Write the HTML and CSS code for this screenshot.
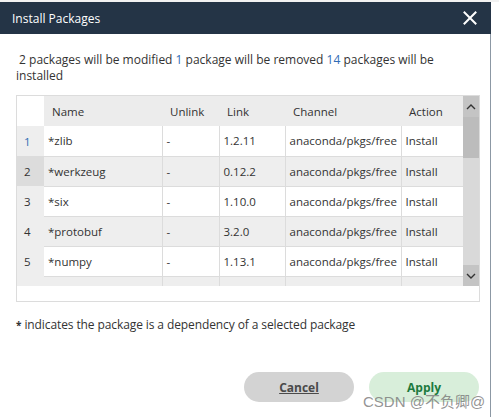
FILE: index.html
```html
<!DOCTYPE html>
<html>
<head>
<meta charset="utf-8">
<link rel="stylesheet" href="styles.css">
</head>
<body>
<div class="page">
  <div class="dialog">
    <div class="header">
      <span class="title">Install Packages</span>
      <svg class="close" width="14" height="14" viewBox="0 0 14 14"><path d="M1.5 1.5 L12.5 12.5 M12.5 1.5 L1.5 12.5" stroke="#fff" stroke-width="2" stroke-linecap="square"/></svg>
    </div>
    <div class="content">
      <div class="summary">
        <div class="line">&nbsp;2 packages will be modified <span class="num">1</span> package will be removed <span class="num">14</span> packages will be</div>
        <div class="line">installed</div>
      </div>
      <div class="grid-box">
        <div class="scroll-region">
          <div class="viewport">
            <table class="pkgs">
              <colgroup>
                <col class="c-num"><col class="c-name"><col class="c-unlink"><col class="c-link"><col class="c-channel"><col class="c-action">
              </colgroup>
              <thead>
                <tr><th class="rn"></th><th>Name</th><th>Unlink</th><th>Link</th><th>Channel</th><th>Action</th></tr>
              </thead>
              <tbody>
                <tr class="odd"><td class="rn first">1</td><td>*zlib</td><td>-</td><td>1.2.11</td><td>anaconda/pkgs/free</td><td>Install</td></tr>
                <tr class="even"><td class="rn hover">2</td><td>*werkzeug</td><td>-</td><td>0.12.2</td><td>anaconda/pkgs/free</td><td>Install</td></tr>
                <tr class="odd"><td class="rn">3</td><td>*six</td><td>-</td><td>1.10.0</td><td>anaconda/pkgs/free</td><td>Install</td></tr>
                <tr class="even"><td class="rn">4</td><td>*protobuf</td><td>-</td><td>3.2.0</td><td>anaconda/pkgs/free</td><td>Install</td></tr>
                <tr class="odd"><td class="rn">5</td><td>*numpy</td><td>-</td><td>1.13.1</td><td>anaconda/pkgs/free</td><td>Install</td></tr>
                <tr class="even"><td class="rn"></td><td></td><td></td><td></td><td></td><td></td></tr>
              </tbody>
            </table>
          </div>
          <div class="vscroll">
            <div class="sb-btn"><svg width="10" height="6" viewBox="0 0 10 6"><path d="M1 5 L5 1 L9 5" fill="none" stroke="#333" stroke-width="1.4"/></svg></div>
            <div class="sb-track"><div class="sb-thumb"></div></div>
            <div class="sb-btn"><svg width="10" height="6" viewBox="0 0 10 6"><path d="M1 1 L5 5 L9 1" fill="none" stroke="#333" stroke-width="1.4"/></svg></div>
          </div>
        </div>
        <div class="hblank"></div>
      </div>
      <p class="note"><b>*</b> indicates the package is a dependency of a selected package</p>
      <div class="actions">
        <button class="btn cancel">Cancel</button>
        <button class="btn apply">Apply</button>
      </div>
    </div>
  </div>
  <div class="behind"></div>
  <div class="watermark">CSDN @不负卿@</div>
</div>
</body>
</html>
```
FILE: styles.css
```css
* { box-sizing: border-box; }
html, body { margin: 0; padding: 0; }
body {
  width: 499px;
  height: 417px;
  overflow: hidden;
  background: #fff;
  font-family: "Open Sans", "Noto Sans", sans-serif;
  color: #333;
}
.page {
  position: relative;
  display: flex;
  width: 499px;
  height: 417px;
  padding-top: 2px;
  background: #f2f2f2;
}
.dialog {
  width: 491px;
  height: 415px;
  background: #fff;
  border-right: 1px solid #8c98a4;
  display: flex;
  flex-direction: column;
}
.header {
  height: 32px;
  background: #243446;
  display: flex;
  align-items: center;
  justify-content: space-between;
  padding: 0 14px 0 12px;
  margin-right: -1px;
}
.title {
  color: #fff;
  font-size: 12px;
}
.close { display: block; }
.content {
  padding: 0 10px 0 16px;
  display: flex;
  flex-direction: column;
}
.summary {
  margin: 18px 0 0 0;
  font-size: 12px;
  line-height: 16px;
}
.line { white-space: nowrap; }
.num { color: #2f6db5; }
.grid-box {
  margin-top: 11px;
  width: 464px;
  height: 207px;
  border: 1px solid #dcdcdc;
  background: #fff;
}
.scroll-region {
  display: flex;
  height: 190px;
}
.viewport {
  width: 446px;
  height: 190px;
  overflow: hidden;
}
.pkgs {
  width: 446px;
  table-layout: fixed;
  border-collapse: collapse;
  font-size: 11.5px;
}
.c-num { width: 27px; }
.c-name { width: 118px; }
.c-unlink { width: 57px; }
.c-link { width: 66px; }
.c-channel { width: 116px; }
.c-action { width: 62px; }
.pkgs th {
  height: 30px;
  background: #ececec;
  font-weight: normal;
  text-align: left;
  padding: 0 0 0 8px;
  color: #333;
  white-space: nowrap;
}
.pkgs th.rn { background: #fff; }
.pkgs td {
  height: 30px;
  padding: 0 0 0 4px;
  border-bottom: 1px solid #dcdcdc;
  border-left: 1px solid #dcdcdc;
  white-space: nowrap;
  overflow: hidden;
}
.pkgs tr.odd td { background: #fff; }
.pkgs tr.even td { background: #eeeeee; }
.pkgs td.rn {
  background: #eeeeee !important;
  border: none;
  padding-left: 7px;
}
.pkgs td.rn + td { border-left: none; }
.pkgs td.rn.first { color: #2f6db5; }
.pkgs td.rn.hover { background: #dcdcdc !important; }
.vscroll {
  width: 16px;
  height: 190px;
  display: flex;
  flex-direction: column;
  background: #d9d9d9;
}
.sb-btn {
  height: 21px;
  background: #c4c4c4;
  display: flex;
  align-items: center;
  justify-content: center;
}
.sb-track {
  flex: 1;
  background: #d9d9d9;
}
.sb-thumb {
  height: 41px;
  background: #bcbcbc;
}
.hblank { height: 15px; }
.note {
  margin: 15px 0 0 0;
  font-size: 12px;
  line-height: 15px;
  letter-spacing: -0.1px;
}
.note b { font-size: 10px; }
.actions {
  display: flex;
  justify-content: flex-end;
  gap: 15px;
  margin-top: 39px;
  width: 464px;
  padding-right: 1px;
}
.btn {
  width: 110px;
  height: 30px;
  border: none;
  border-radius: 15px;
  font-family: "Open Sans", "Noto Sans", sans-serif;
  font-size: 12px;
  font-weight: bold;
}
.cancel {
  background: #d3d3d3;
  color: #4a4a4a;
  text-decoration: underline;
}
.apply {
  background: #d8eeda;
  color: #1d7a3e;
}
.behind {
  flex: 1;
  background: #fff;
}
.watermark {
  position: absolute;
  left: 363px;
  top: 390px;
  font-family: "Liberation Sans", "Noto Sans CJK SC", sans-serif;
  font-size: 15px;
  color: rgba(120, 120, 120, 0.8);
  white-space: nowrap;
}
```
